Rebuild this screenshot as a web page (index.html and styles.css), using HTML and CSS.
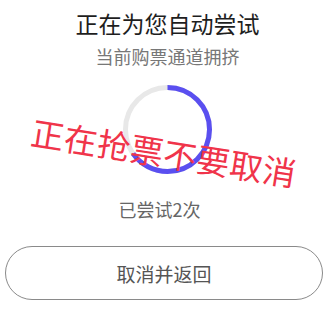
FILE: index.html
```html
<!DOCTYPE html>
<html lang="zh-CN">
<head>
<meta charset="utf-8">
<link rel="stylesheet" href="styles.css">
</head>
<body>
<div class="page">
  <h1 class="title">正在为您自动尝试</h1>
  <p class="subtitle">当前购票通道拥挤</p>
  <div class="spinner">
    <svg width="89" height="89" viewBox="0 0 89 89">
      <circle cx="44.5" cy="44.5" r="42" fill="none" stroke="#e8e8e8" stroke-width="5"/>
      <circle cx="44.5" cy="44.5" r="42" fill="none" stroke="#5a4ff0" stroke-width="5" stroke-dasharray="172 264" transform="rotate(-90 44.5 44.5)"/>
    </svg>
  </div>
  <p class="count">已尝试2次</p>
  <button class="cancel">取消并返回</button>
  <div class="stamp">正在抢票不要取消</div>
</div>
</body>
</html>
```
FILE: styles.css
```css
html, body {
  margin: 0;
  padding: 0;
  background: #fff;
}
body {
  font-family: "Noto Sans CJK SC", "Noto Sans", sans-serif;
}
.page {
  position: relative;
  width: 335px;
  height: 315px;
  display: flex;
  flex-direction: column;
  align-items: center;
  overflow: hidden;
}
.title {
  margin: 8px 0 0;
  font-size: 23px;
  line-height: 30px;
  font-weight: 400;
  color: #1e1e1e;
}
.subtitle {
  margin: 5px 0 0;
  font-size: 18px;
  line-height: 26px;
  color: #777;
}
.spinner {
  margin-top: 16px;
  width: 89px;
  height: 89px;
}
.spinner svg {
  display: block;
}
.count {
  margin: 23px 16px 0 0;
  font-size: 18px;
  line-height: 25px;
  color: #666;
}
.cancel {
  margin: 24px 12px 0 5px;
  align-self: stretch;
  height: 54px;
  border: 1.5px solid #8a8a8a;
  border-radius: 27px;
  background: #fff;
  font-family: inherit;
  font-size: 19px;
  color: #555;
  padding: 0;
}
.stamp {
  position: absolute;
  left: 164px;
  top: 152px;
  transform: translate(-50%, -50%) rotate(9deg);
  font-size: 33px;
  line-height: 40px;
  color: #f0344a;
  white-space: nowrap;
  letter-spacing: 0.5px;
}
```
